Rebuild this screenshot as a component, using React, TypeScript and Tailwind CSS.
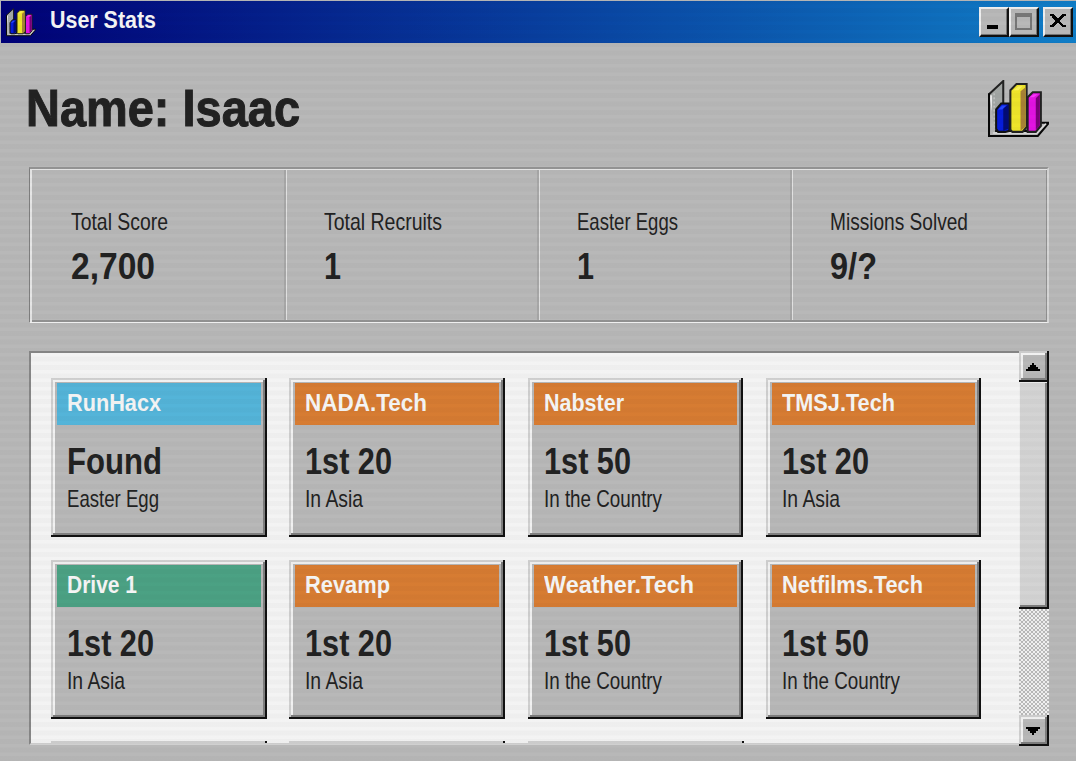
import { useLayoutEffect, useRef } from 'react';

function Fit({ text, width, className }: { text: string; width: number; className: string }) {
  const ref = useRef<HTMLSpanElement>(null);
  useLayoutEffect(() => {
    const el = ref.current;
    if (!el) return;
    el.style.transform = 'none';
    el.style.transform = `scaleX(${width / el.getBoundingClientRect().width})`;
  }, [text, width]);
  return (
    <span ref={ref} className={`block w-max origin-left whitespace-pre ${className}`}>
      {text}
    </span>
  );
}

function ChartIcon({ className }: { className: string }) {
  return (
    <svg viewBox="0 0 60 57" className={className}>
      <path d="M1 14L15 1V42L7 49V55H1Z" fill="#a4a8a6" />
      <path d="M1 14L15 1V28" fill="none" stroke="#222" strokeWidth="2" />
      <path d="M3 15V52" stroke="#eee" strokeWidth="2" />
      <path d="M6 13V48" stroke="#d4d4d4" strokeWidth="1" strokeDasharray="2 2" />
      <path d="M1 13V55H49L60 42H50L46 50H7" fill="#b8b8b8" stroke="#080808" strokeWidth="2" />
      <path d="M5 52H48L57 43" fill="none" stroke="#ddd" strokeWidth="1.5" />
      <path d="M8 29L13 23H21V50L17 51H10L8 48Z" fill="#061ddd" stroke="#111" strokeWidth="2" />
      <path d="M15 28L20 24V48L15 50Z" fill="#020b78" />
      <path d="M10 29L14 25H18L14 29Z" fill="#2647ff" />
      <path d="M22 10L28 4H38V46L34 51H24L22 49Z" fill="#f1e72b" stroke="#222" strokeWidth="2" />
      <path d="M32 11L37 7V46L32 50Z" fill="#a98336" />
      <path d="M25 10L30 6H34L30 10Z" fill="#fff65c" />
      <path d="M39 17L44 12H52V45L47 51H39Z" fill="#e513e5" stroke="#222" strokeWidth="2" />
      <path d="M47 18L51 14V45L47 49Z" fill="#790079" />
      <path d="M41 17L45 14H49L45 17Z" fill="#ff39ff" />
    </svg>
  );
}

function WindowButton({ kind }: { kind: 'min' | 'max' | 'close' }) {
  return (
    <button className="flex h-[30px] w-[30px] items-center justify-center border-2 border-b-[#111] border-l-[#f1f1f1] border-r-[#111] border-t-[#f1f1f1] bg-[#bababa] shadow-[inset_-1px_-1px_#777]">
      <svg viewBox="0 0 26 26" className="size-[26px]" shapeRendering="crispEdges">
        {kind === 'min' && <path d="M6 16H17V20H6Z" />}
        {kind === 'max' && <path d="M5 5H20V20H5Z M5 6.5H20" fill="none" stroke="#777" strokeWidth="2" />}
        {kind === 'close' && <path d="M5 5H9V6H10V7H11V8H12V9H14V8H15V7H16V6H17V5H21V7H19V8H18V9H17V10H16V11H15V13H16V14H17V15H18V16H19V16H21V18H17V17H16V16H15V15H14V14H12V15H11V16H10V17H9V18H5V16H7V15H8V14H9V13H10V11H9V10H8V9H7V7H5Z" />}
      </svg>
    </button>
  );
}

const stats = [
  { label: 'Total Score', lw: 97, value: '2,700', vw: 84 },
  { label: 'Total Recruits', lw: 118, value: '1', vw: 17 },
  { label: 'Easter Eggs', lw: 101, value: '1', vw: 17 },
  { label: 'Missions Solved', lw: 138, value: '9/?', vw: 47 },
];

const cards = [
  { title: 'RunHacx', tw: 94, value: 'Found', vw: 95, label: 'Easter Egg', lw: 92, color: 'bg-[#55b6db]' },
  { title: 'NADA.Tech', tw: 122, value: '1st 20', vw: 87, label: 'In Asia', lw: 58, color: 'bg-[#d97d33]' },
  { title: 'Nabster', tw: 80, value: '1st 50', vw: 87, label: 'In the Country', lw: 118, color: 'bg-[#d97d33]' },
  { title: 'TMSJ.Tech', tw: 113, value: '1st 20', vw: 87, label: 'In Asia', lw: 58, color: 'bg-[#d97d33]' },
  { title: 'Drive 1', tw: 70, value: '1st 20', vw: 87, label: 'In Asia', lw: 58, color: 'bg-[#4ca385]' },
  { title: 'Revamp', tw: 85, value: '1st 20', vw: 87, label: 'In Asia', lw: 58, color: 'bg-[#d97d33]' },
  { title: 'Weather.Tech', tw: 150, value: '1st 50', vw: 87, label: 'In the Country', lw: 118, color: 'bg-[#d97d33]' },
  { title: 'Netfilms.Tech', tw: 141, value: '1st 50', vw: 87, label: 'In the Country', lw: 118, color: 'bg-[#d97d33]' },
];

const edge =
  'shadow-[inset_-2px_-2px_#111,inset_2px_2px_#d2d2d2,inset_-4px_-4px_#808080,inset_4px_4px_#f4f4f4]';

function ScrollButton({ down = false }: { down?: boolean }) {
  return (
    <button className={`flex h-[31px] w-[30px] shrink-0 items-center justify-center pr-[2px] bg-[#bababa] ${edge}`}>
      <svg viewBox="0 0 14 8" className="h-[8px] w-[14px]" shapeRendering="crispEdges">
        <path d={down ? 'M0 0H14V2H12V4H10V6H8V8H6V6H4V4H2V2H0Z' : 'M0 8H14V6H12V4H10V2H8V0H6V2H4V4H2V6H0Z'} />
      </svg>
    </button>
  );
}

export default function App() {
  return (
    <main className="relative flex h-[761px] w-[1076px] flex-col overflow-hidden bg-[#bababa] font-['Liberation_Sans',sans-serif] text-[#222]">
      <header className="flex h-[43px] shrink-0 border-l border-t border-[#bababa] bg-linear-to-r/srgb from-[#000078] to-[#107fc9] pl-[5px] pr-[3px]">
        <ChartIcon className="mt-[7px] h-[29px] w-[30px]" />
        <div className="ml-[14px] mt-[7px] flex-1">
          <Fit text="User Stats" width={106} className="text-[24px] font-bold leading-[24px] text-[#f8f8f8]" />
        </div>
        <div className="mt-[6px] flex">
          <WindowButton kind="min" />
          <WindowButton kind="max" />
          <div className="ml-1"><WindowButton kind="close" /></div>
        </div>
      </header>
      <section className="flex h-[124px] shrink-0 justify-between pl-[26px] pr-[27px]">
        <h1 className="pt-[35px]">
          <Fit text="Name: Isaac" width={274} className="text-[52px] font-bold leading-[60px] [-webkit-text-stroke:1px_#222]" />
        </h1>
        <ChartIcon className="mt-[37px] h-[58px] w-[61px]" />
      </section>
      <section className="ml-[29px] mr-[27px] grid h-[156px] shrink-0 grid-cols-[257px_253px_253px_1fr] border-b border-l border-r-2 border-t-2 border-b-[#f4f4f4] border-l-[#808080] border-r-[#d8d8d8] border-t-[#949494] shadow-[inset_2px_1px_#e8e8e8,inset_-1px_-2px_#929292]">
        {stats.map((s, i) => (
          <div
            key={s.label}
            className={`mb-[2px] mt-px pt-[39px] ${i === 0 ? 'pl-[41px]' : 'pl-[37px]'} ${i < 3 ? 'border-r border-[#e4e4e4] shadow-[inset_-2px_0_#a9a9a9]' : ''}`}
          >
            <Fit text={s.label} width={s.lw} className="text-[24px] leading-[26px]" />
            <Fit text={s.value} width={s.vw} className="mt-[12px] text-[36px] font-bold leading-[40px]" />
          </div>
        ))}
      </section>
      <section className="ml-[29px] mr-[27px] mt-[28px] flex h-[395px] shrink-0">
        <div className="h-[394px] w-[990px] overflow-hidden border-b-2 border-l-2 border-t-2 border-b-[#d2d2d2] border-l-[#888] border-t-[#888] bg-[#f6f6f6] pl-5 pt-[25px]">
          <div className="grid grid-cols-[215px_215px_215px_215px] gap-x-[23.3px] gap-y-[22.6px]">
            {cards.map((c, i) => (
              <article key={c.title} className={`h-[159px] ${i % 4 > 1 ? 'w-[215px]' : 'w-[216px]'} bg-[#bababa] px-[6px] pb-[6px] pt-[5px] ${edge}`}>
                <div className={`h-[42px] pl-[10px] pt-[7px] text-[#f8f8f8] ${c.color}`}>
                  <Fit text={c.title} width={c.tw} className="text-[24px] font-bold leading-[26px]" />
                </div>
                <div className="pl-[10px] pt-[17px]">
                  <Fit text={c.value} width={c.vw} className="text-[36px] font-bold leading-[40px]" />
                  <Fit text={c.label} width={c.lw} className="mt-[4px] text-[24px] leading-[26px]" />
                </div>
              </article>
            ))}
            {[0, 1, 2].map((i) => (
              <article key={i} className={`h-[159px] w-[216px] bg-[#bababa] ${edge}`} />
            ))}
          </div>
        </div>
        <div className="flex h-[395px] w-[30px] flex-col bg-[repeating-conic-gradient(#f4f4f4_0_25%,#bbbbbb_0_50%)] bg-[size:4px_4px]">
          <ScrollButton />
          <div className="h-[227px] bg-[#d6d6d6] shadow-[inset_-2px_-2px_#111,inset_1px_1px_#f1f1f1,inset_-4px_-4px_#808080]" />
          <div className="flex-1" />
          <ScrollButton down />
        </div>
      </section>
      <div className="pointer-events-none absolute inset-0 bg-[repeating-linear-gradient(to_bottom,rgba(0,0,0,.03)_0px,rgba(0,0,0,.03)_4px,rgba(0,0,0,.01)_5px,rgba(0,0,0,.01)_7.5px,rgba(0,0,0,.03)_8.5px)]" />
    </main>
  );
}
